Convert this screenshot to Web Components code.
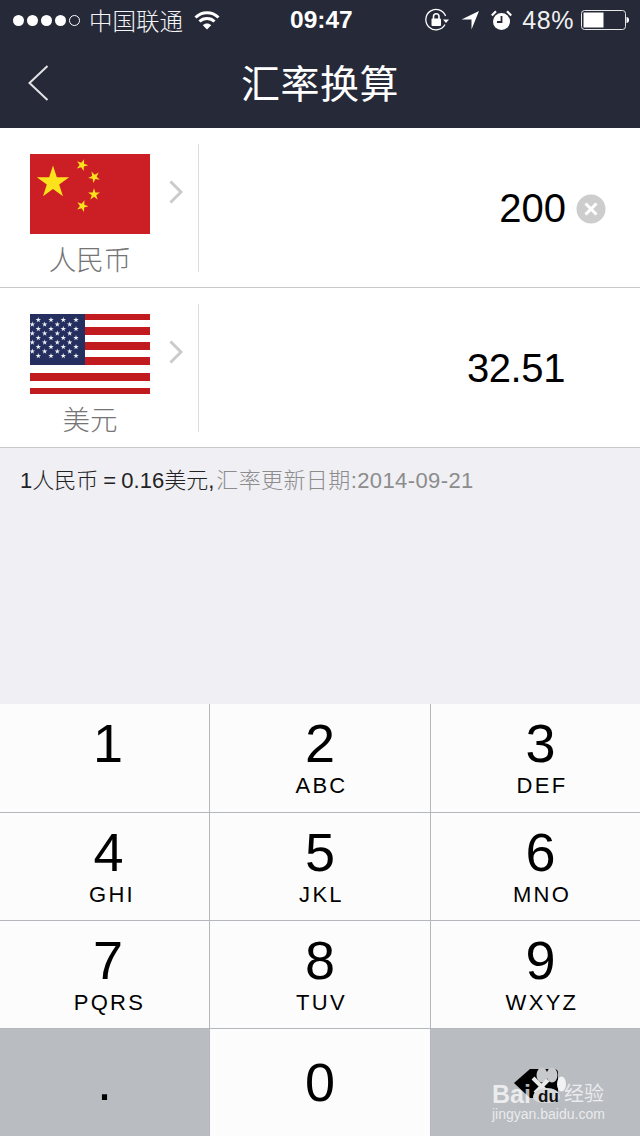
<!DOCTYPE html>
<html>
<head>
<meta charset="utf-8">
<style>
html, body {
  margin: 0;
  padding: 0;
}
body {
  width: 640px;
  height: 1136px;
  overflow: hidden;
  background: #efeff4;
  font-family: "Liberation Sans", "Noto Sans CJK SC", sans-serif;
}
</style>
</head>
<body>
<status-bar></status-bar>
<nav-bar>汇率换算</nav-bar>
<currency-row name="人民币" value="200" clearable>
  <cn-flag slot="flag"></cn-flag>
</currency-row>
<currency-row name="美元" value="32.51">
  <us-flag slot="flag"></us-flag>
</currency-row>
<rate-note>
  <span slot="rate">1人民币 = 0.16美元,</span>
  <span slot="date">汇率更新日期:2014-09-21</span>
</rate-note>
<key-pad></key-pad>
<baidu-mark></baidu-mark>

<script>
(function() {
  const FONT = '"Liberation Sans", "Noto Sans CJK SC", sans-serif';

  function starPoints(cx, cy, r, rot) {
    let pts = [];
    for (let i = 0; i < 10; i++) {
      let rad = i % 2 ? r * 0.382 : r;
      let a = (rot - 90 + i * 36) * Math.PI / 180;
      pts.push((cx + rad * Math.cos(a)).toFixed(2) + ',' + (cy + rad * Math.sin(a)).toFixed(2));
    }
    return pts.join(' ');
  }

  class StatusBar extends HTMLElement {
    constructor() {
      super();
      let dots = [0, 1, 2, 3].map(i => `<i class="dot"></i>`).join('');
      this.attachShadow({mode: 'open'}).innerHTML = `
<style>
:host {
  display: flex;
  align-items: center;
  height: 40px;
  background: #252938;
  color: #fff;
  font-family: ${FONT};
  position: relative;
}
.left {
  display: flex;
  align-items: center;
  padding-left: 13px;
}
.dot, .dot-off {
  box-sizing: border-box;
  width: 11px;
  height: 11px;
  border-radius: 50%;
  background: #fff;
  margin-right: 3px;
}
.dot-off {
  background: none;
  border: 1px solid #fff;
}
.carrier {
  font-size: 23.5px;
  font-weight: 300;
  margin-left: 6px;
  color: #f4f4f6;
}
.wifi {
  margin-left: 11px;
}
.time {
  position: absolute;
  left: 290px;
  top: 6px;
  font-size: 24.5px;
  line-height: 28px;
  font-weight: bold;
}
.right {
  margin-left: auto;
  display: flex;
  align-items: center;
  padding-right: 11px;
}
.pct {
  font-size: 25px;
  letter-spacing: 0.6px;
  margin: 0 7px 0 10px;
  color: #f0f0f0;
}
svg {
  display: block;
}
</style>
<div class="left">
  ${dots}<i class="dot-off"></i>
  <span class="carrier">中国联通</span>
  <svg class="wifi" width="26" height="20" viewBox="0 0 26 20" fill="none" stroke="#fff" stroke-width="3">
    <path d="M1.5 7.5C8 1 18 1 24.5 7.5"/>
    <path d="M5.5 11.5C9.5 7.5 16.500 7.5 20.500 11.500"/>
    <path d="M13 19.500L8.800 15.200C11 13 15 13 17.200 15.200Z" fill="#fff" stroke="none"/>
  </svg>
</div>
<span class="time">09:47</span>
<div class="right">
  <svg width="24" height="24" viewBox="0 0 24 24" fill="none" stroke="#fff" stroke-width="1.300">
    <path d="M20 16.500A10.200 10.200 0 1 1 20.600 8"/>
    <path d="M18 11.500h6l-3 3.500z" fill="#fff" stroke="none"/>
    <rect x="6.500" y="10.500" width="9.500" height="7.500" rx="1" fill="#fff" stroke="none"/>
    <path d="M8.500 11V8.500a2.700 2.700 0 0 1 5.500 0V11" stroke-width="1.600"/>
  </svg>
  <svg style="margin-left:12px" width="19" height="20" viewBox="0 0 19 20">
    <path d="M18 1L10.500 19.500V9.500H0.500z" fill="#fff"/>
  </svg>
  <svg style="margin-left:11px" width="21" height="21" viewBox="0 0 21 21">
    <circle cx="10.500" cy="11.500" r="8.500" fill="#fff"/>
    <path d="M10.500 6v6H6" fill="none" stroke="#252938" stroke-width="1.800"/>
    <path d="M0.800 5.500L5 1.200M20.200 5.500L16 1.200" stroke="#fff" stroke-width="2.200"/>
  </svg>
  <span class="pct">48%</span>
  <svg width="48" height="20" viewBox="0 0 48 20">
    <rect x="0.500" y="0.500" width="44" height="19" rx="3" fill="none" stroke="#e8e8e8" stroke-width="1"/>
    <rect x="2.500" y="2.500" width="20" height="15" fill="#fff"/>
    <path d="M45.500 7c1.500 0 2.500 1 2.500 3s-1 3-2.500 3z" fill="#fff"/>
  </svg>
</div>
`;
    }
  }
  customElements.define('status-bar', StatusBar);

  class NavBar extends HTMLElement {
    constructor() {
      super();
      this.attachShadow({mode: 'open'}).innerHTML = `
<style>
:host {
  display: flex;
  align-items: center;
  justify-content: center;
  height: 88px;
  background: #252938;
  color: #fff;
  position: relative;
  font-family: ${FONT};
}
.title {
  font-size: 39px;
  line-height: 50px;
  letter-spacing: 0.5px;
  margin-top: 2px;
}
svg {
  position: absolute;
  left: 27px;
  top: 24px;
}
</style>
<svg width="24" height="38" viewBox="0 0 24 38" fill="none" stroke="#e4e4e6" stroke-width="2">
  <path d="M20.500 2L2.500 19l18 17"/>
</svg>
<div class="title"><slot></slot></div>
`;
    }
  }
  customElements.define('nav-bar', NavBar);

  class CnFlag extends HTMLElement {
    constructor() {
      super();
      this.attachShadow({mode: 'open'}).innerHTML = `
<style>
:host { display: block; width: 120px; height: 80px; }
svg { display: block; }
</style>
<svg width="120" height="80" viewBox="0 0 120 80">
  <rect width="120" height="80" fill="#cc1f25"/>
  <g fill="#fbe21d">
    <polygon points="${starPoints(23, 28.500, 17, 0)}"/>
    <polygon points="${starPoints(52, 11, 6.200, 20)}"/>
    <polygon points="${starPoints(64.300, 23, 6.200, 45)}"/>
    <polygon points="${starPoints(64, 40.500, 6.200, 0)}"/>
    <polygon points="${starPoints(52.300, 52, 6.200, 20)}"/>
  </g>
</svg>
`;
    }
  }
  customElements.define('cn-flag', CnFlag);

  class UsFlag extends HTMLElement {
    constructor() {
      super();
      let stars = '';
      let ys = [6, 10.5, 15, 19.5, 24, 28.5, 33, 37.5, 42];
      ys.forEach((y, row) => {
        let xs = row % 2 ? [2.300, 14.700, 27.300, 39.700] : [8.300, 21, 33.300, 46];
        xs.forEach(x => {
          stars += `<polygon points="${starPoints(x, y, 2.900, 0)}"/>`;
        });
      });
      let red = [[0, 6], [13, 8], [28, 8], [43, 8], [59, 8], [74, 6]];
      let bars = red.map(r => `<rect y="${r[0]}" width="120" height="${r[1]}" fill="#c11b20"/>`).join('');
      this.attachShadow({mode: 'open'}).innerHTML = `
<style>
:host { display: block; width: 120px; height: 80px; }
svg { display: block; }
</style>
<svg width="120" height="80" viewBox="0 0 120 80">
  <rect width="120" height="80" fill="#fff"/>
  ${bars}
  <rect width="55" height="51" fill="#242f5f"/>
  <g fill="#f0f1f5">${stars}</g>
</svg>
`;
    }
  }
  customElements.define('us-flag', UsFlag);

  class CurrencyRow extends HTMLElement {
    constructor() {
      super();
      let name = this.getAttribute('name');
      let value = this.getAttribute('value');
      let clearable = this.hasAttribute('clearable');
      let clear = clearable ? `
<svg class="clear" width="30" height="30" viewBox="0 0 30 30">
  <circle cx="15" cy="15" r="14.500" fill="#cdcdcd"/>
  <path d="M9.500 9.500l11 11M20.500 9.500l-11 11" stroke="#fff" stroke-width="3"/>
</svg>` : '';
      this.attachShadow({mode: 'open'}).innerHTML = `
<style>
:host {
  display: flex;
  box-sizing: border-box;
  height: 160px;
  background: #fff;
  border-bottom: 1px solid #c8c8cc;
  font-family: ${FONT};
}
.left {
  box-sizing: border-box;
  width: 199px;
  margin-top: 16px;
  height: 128px;
  border-right: 1px solid #dcdcdc;
  display: flex;
  align-items: flex-start;
  padding: 10px 0 0 30px;
}
.flag {
  width: 120px;
  text-align: center;
}
.name {
  font-size: 27.500px;
  font-weight: 300;
  line-height: 32px;
  margin-top: 11px;
  color: #757575;
}
.chev {
  margin: 26px 0 0 19px;
}
.value {
  flex: 1;
  display: flex;
  align-items: center;
  justify-content: flex-end;
  padding: 0 34px 0 0;
  height: 161px;
  font-size: 40px;
  color: #000;
}
.clear {
  margin-left: 10px;
}
.num {
  margin-right: ${clearable ? 0 : 41}px;
  letter-spacing: ${clearable ? 0 : -0.4}px;
}
</style>
<div class="left">
  <div class="flag">
    <slot name="flag"></slot>
    <div class="name">${name}</div>
  </div>
  <svg class="chev" width="14" height="24" viewBox="0 0 14 24" fill="none" stroke="#cbcbcb" stroke-width="3">
    <path d="M1.500 1.500L12 12 1.500 22.500"/>
  </svg>
</div>
<div class="value"><span class="num">${value}</span>${clear}</div>
`;
    }
  }
  customElements.define('currency-row', CurrencyRow);

  class RateNote extends HTMLElement {
    constructor() {
      super();
      this.attachShadow({mode: 'open'}).innerHTML = `
<style>
:host {
  display: block;
  box-sizing: border-box;
  height: 256px;
  padding: 20px 0 0 20px;
  background: #efeff4;
  font-family: ${FONT};
  font-size: 22px;
  font-weight: 300;
  line-height: 26px;
  white-space: nowrap;
}
.rate { color: #222; word-spacing: -1px; }
.date { color: #8c8c8c; letter-spacing: 0.4px; margin-left: 2px; }
</style>
<span class="rate"><slot name="rate"></slot></span><span class="date"><slot name="date"></slot></span>
`;
    }
  }
  customElements.define('rate-note', RateNote);

  class PadKey extends HTMLElement {
    constructor() {
      super();
      let digit = this.getAttribute('digit') || '';
      let letters = this.getAttribute('letters') || '';
      let pad = this.getAttribute('pad') || '0';
      let top = this.getAttribute('top') || '8';
      let shift = this.getAttribute('shift') || '3';
      this.attachShadow({mode: 'open'}).innerHTML = `
<style>
:host {
  display: block;
  background: #fcfcfc;
  color: #000;
  text-align: center;
  font-family: ${FONT};
  box-sizing: border-box;
  padding-left: ${pad}px;
  overflow: hidden;
}
:host([dark]) {
  background: #b9bcc1;
}
.d {
  font-size: 54px;
  line-height: 62px;
  padding-top: ${top}px;
}
.l {
  font-size: 22px;
  line-height: 26px;
  letter-spacing: 2.300px;
  padding-left: ${shift}px;
  margin-top: -1px;
}
</style>
<div class="d">${digit}</div>
<div class="l">${letters}</div>
<slot></slot>
`;
    }
  }
  customElements.define('pad-key', PadKey);

  class KeyPad extends HTMLElement {
    constructor() {
      super();
      this.attachShadow({mode: 'open'}).innerHTML = `
<style>
:host {
  display: grid;
  grid-template-columns: 209px 220px 209px;
  grid-template-rows: 108px 107px 107px 107px;
  gap: 1px;
  height: 432px;
  background: #b4b7bc;
}
.back {
  position: absolute;
  left: 514px;
  top: 1069px;
}
</style>
<pad-key digit="1" pad="7"></pad-key>
<pad-key digit="2" letters="ABC"></pad-key>
<pad-key digit="3" letters="DEF" pad="10"></pad-key>
<pad-key digit="4" letters="GHI" pad="8" shift="7"></pad-key>
<pad-key digit="5" letters="JKL"></pad-key>
<pad-key digit="6" letters="MNO" pad="10"></pad-key>
<pad-key digit="7" letters="PQRS" pad="7"></pad-key>
<pad-key digit="8" letters="TUV"></pad-key>
<pad-key digit="9" letters="WXYZ" pad="10"></pad-key>
<pad-key digit="." dark top="21"></pad-key>
<pad-key digit="0" top="22"></pad-key>
<pad-key dark></pad-key>
<svg class="back" width="46" height="32" viewBox="0 0 46 32">
  <path d="M0 14L16 0h24q4 0 4 4v25H16z" fill="#000"/>
</svg>
`;
    }
  }
  customElements.define('key-pad', KeyPad);

  class BaiduMark extends HTMLElement {
    constructor() {
      super();
      this.attachShadow({mode: 'open'}).innerHTML = `
<style>
:host {
  display: block;
  position: absolute;
  left: 490px;
  top: 1064px;
  width: 120px;
  height: 60px;
  color: rgba(255,255,255,0.72);
  font-family: ${FONT};
}
.bai {
  position: absolute;
  left: 2px;
  top: 16px;
  font-size: 25px;
  line-height: 28px;
  font-weight: bold;
}
.du {
  position: absolute;
  left: 48px;
  top: 24px;
  font-size: 17px;
  line-height: 18px;
  font-weight: bold;
  color: #111;
}
.jy {
  position: absolute;
  left: 74px;
  top: 17px;
  font-size: 20px;
  line-height: 26px;
}
.url {
  position: absolute;
  left: 2px;
  top: 41px;
  font-size: 14px;
  line-height: 18px;
}
svg {
  position: absolute;
  left: 0;
  top: 0;
}
</style>
<span class="bai">Bai</span>
<svg width="80" height="44" viewBox="0 0 80 44">
  <g fill="#c8c9cc">
    <ellipse cx="52" cy="11" rx="5.500" ry="7.500"/>
    <ellipse cx="62" cy="11" rx="5.500" ry="7.500"/>
  </g>
  <path d="M43 14L55 26M58 16L45 29" stroke="#e8e8ea" stroke-width="4"/>
  <ellipse cx="71.500" cy="20" rx="4.500" ry="7.500" fill="#f2f2f3"/>
  <path d="M43 33c0-6 8-9 14-9s13 3 13 9c0 5-7 6-13 6S43 38 43 33z" fill="#d6d7da"/>
</svg>
<span class="du">du</span>
<span class="jy">经验</span>
<span class="url">jingyan.baidu.com</span>
`;
    }
  }
  customElements.define('baidu-mark', BaiduMark);
})();
</script>
</body>
</html>
